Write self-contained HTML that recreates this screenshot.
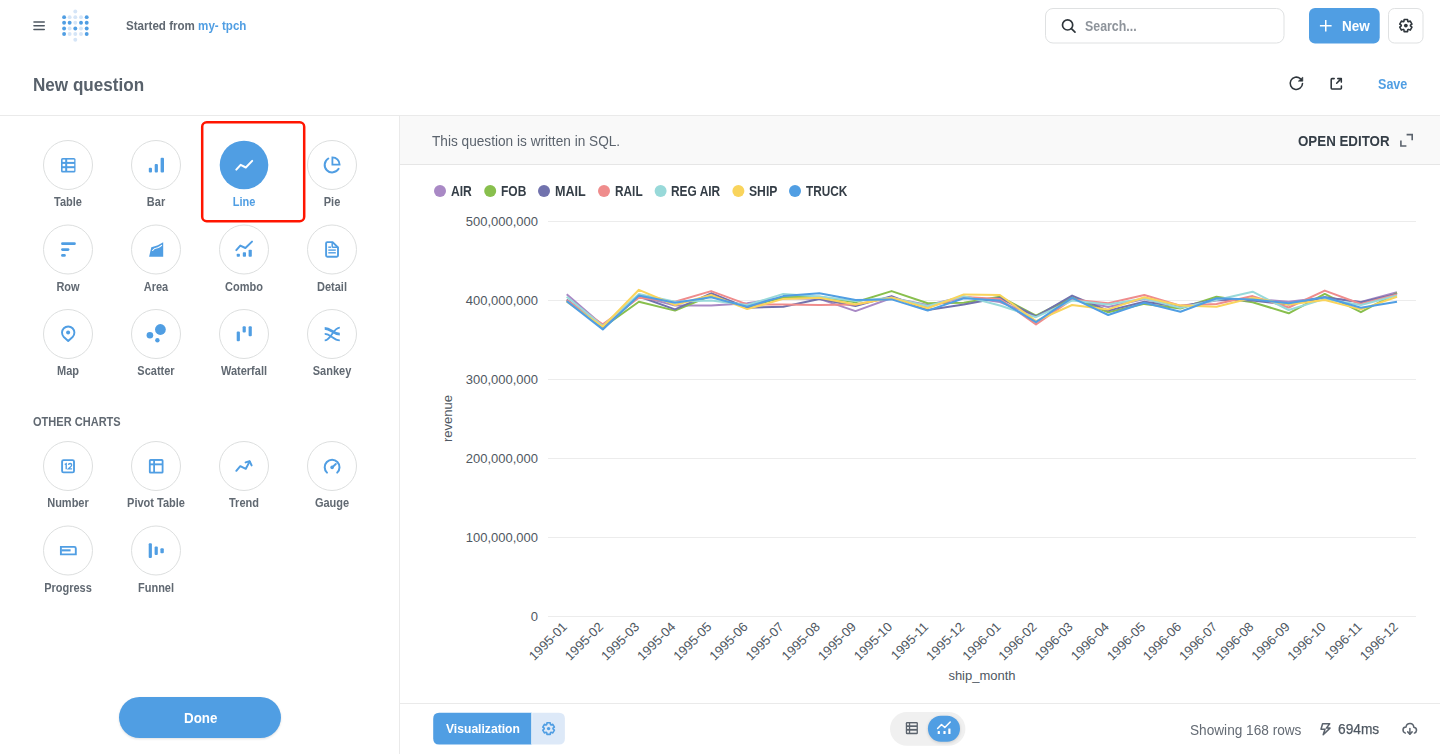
<!DOCTYPE html>
<html><head><meta charset="utf-8">
<style>
*{box-sizing:border-box;margin:0;padding:0}
html,body{width:1440px;height:754px;overflow:hidden;background:#fff;font-family:"Liberation Sans",sans-serif;color:#4f5862}
.ov{position:absolute;left:0;top:0}
.ax text{font-size:13px;fill:#4f5862;font-family:"Liberation Sans",sans-serif}
.t{position:absolute;white-space:nowrap;line-height:1;transform-origin:0 0}
.lbl{position:absolute;width:120px;text-align:center;transform:scaleX(0.88);transform-origin:60px 0;font-size:12.5px;font-weight:bold;line-height:1;white-space:nowrap}
.leg{top:184px;font-size:14px;font-weight:bold;color:#353e47}
</style></head><body>
<svg class="ov" width="1440" height="754" viewBox="0 0 1440 754">
<g fill="#4f5862">
 <rect x="33.2" y="21.2" width="11.8" height="1.6" rx="0.8"/>
 <rect x="33.2" y="24.9" width="11.8" height="1.6" rx="0.8"/>
 <rect x="33.2" y="28.7" width="11.8" height="1.6" rx="0.8"/>
</g>
<circle cx="75.3" cy="11.5" r="1.95" fill="#d5e5f7"/>
<circle cx="64.1" cy="17.15" r="1.95" fill="#509ee3"/>
<circle cx="69.65" cy="17.15" r="1.95" fill="#d5e5f7"/>
<circle cx="75.3" cy="17.15" r="1.95" fill="#d5e5f7"/>
<circle cx="81" cy="17.15" r="1.95" fill="#d5e5f7"/>
<circle cx="86.7" cy="17.15" r="1.95" fill="#509ee3"/>
<circle cx="64.1" cy="22.8" r="1.95" fill="#509ee3"/>
<circle cx="69.65" cy="22.8" r="1.95" fill="#509ee3"/>
<circle cx="75.3" cy="22.8" r="1.95" fill="#d5e5f7"/>
<circle cx="81" cy="22.8" r="1.95" fill="#509ee3"/>
<circle cx="86.7" cy="22.8" r="1.95" fill="#509ee3"/>
<circle cx="64.1" cy="28.5" r="1.95" fill="#509ee3"/>
<circle cx="69.65" cy="28.5" r="1.95" fill="#d5e5f7"/>
<circle cx="75.3" cy="28.5" r="1.95" fill="#509ee3"/>
<circle cx="81" cy="28.5" r="1.95" fill="#d5e5f7"/>
<circle cx="86.7" cy="28.5" r="1.95" fill="#509ee3"/>
<circle cx="64.1" cy="34" r="1.95" fill="#509ee3"/>
<circle cx="69.65" cy="34" r="1.95" fill="#d5e5f7"/>
<circle cx="75.3" cy="34" r="1.95" fill="#d5e5f7"/>
<circle cx="81" cy="34" r="1.95" fill="#d5e5f7"/>
<circle cx="86.7" cy="34" r="1.95" fill="#509ee3"/>
<circle cx="75.3" cy="39.8" r="1.95" fill="#d5e5f7"/>
<rect x="1045.5" y="8.5" width="238.5" height="34.5" rx="7.5" fill="#fff" stroke="#dfe1e2"/>
<g fill="none" stroke="#2e353b" stroke-width="1.7" stroke-linecap="round">
 <circle cx="1067.6" cy="24.9" r="5.1"/>
 <line x1="1071.4" y1="28.7" x2="1075" y2="32.2"/>
</g>
<rect x="1309" y="8" width="70.7" height="35.5" rx="6" fill="#509ee3"/>
<g stroke="#fff" stroke-width="1.5">
 <line x1="1319.9" y1="25.75" x2="1331.6" y2="25.75"/>
 <line x1="1325.75" y1="19.9" x2="1325.75" y2="31.6"/>
</g>
<rect x="1388.5" y="8.5" width="34.5" height="34.5" rx="6" fill="#fff" stroke="#dfe1e2"/>
<path d="M1407.81 21.44 L1407.55 19.53 L1404.15 19.53 L1403.89 21.44 L1403.22 21.82 L1401.44 21.10 L1399.75 24.04 L1401.27 25.22 L1401.27 25.98 L1399.75 27.16 L1401.44 30.10 L1403.22 29.38 L1403.89 29.76 L1404.15 31.67 L1407.55 31.67 L1407.81 29.76 L1408.48 29.38 L1410.26 30.10 L1411.95 27.16 L1410.43 25.98 L1410.43 25.22 L1411.95 24.04 L1410.26 21.10 L1408.48 21.82 Z" fill="none" stroke="#2e353b" stroke-width="1.6" stroke-linejoin="round"/>
<circle cx="1405.85" cy="25.6" r="1.9" fill="#2e353b"/>
<!-- refresh -->
<g fill="none" stroke="#2e353b" stroke-width="1.55" stroke-linecap="round" stroke-linejoin="round">
 <path d="M1302.5 83.5 A6.15 6.15 0 1 1 1300.3 78.6"/>
 <path d="M1334.2 78.6 H1332 Q1331.2 78.6 1331.2 79.4 V88.1 Q1331.2 88.9 1332 88.9 H1340.6 Q1341.4 88.9 1341.4 88.1 V86"/>
 <line x1="1336.7" y1="83.2" x2="1341" y2="78.9"/>
 <polyline points="1337.8,78.6 1341.3,78.6 1341.3,82.1"/>
</g>
<path d="M1302.8 77.1 V81.2 H1298.3 Z" fill="#2e353b" stroke="#2e353b" stroke-width="0.6" stroke-linejoin="round"/>
<!-- borders -->
<rect x="0" y="115" width="1440" height="1" fill="#eaeaea"/>
<rect x="399" y="115" width="1" height="639" fill="#eaeaea"/>
<rect x="400" y="116" width="1040" height="48" fill="#f9f9f9"/>
<rect x="400" y="164" width="1040" height="1" fill="#e6e6e6"/>
<rect x="400" y="703" width="1040" height="1" fill="#eaeaea"/>
<!-- expand icon -->
<g fill="none" stroke="#5b636d" stroke-width="1.6">
 <polyline points="1406.6,134.6 1412.2,134.6 1412.2,140.2"/>
 <polyline points="1400.9,140.6 1400.9,146 1406.4,146"/>
</g>
<!-- legend dots -->
<circle cx="440" cy="191" r="6" fill="#A989C5"/>
<circle cx="490.2" cy="191" r="6" fill="#88BF4D"/>
<circle cx="544" cy="191" r="6" fill="#7172AD"/>
<circle cx="604" cy="191" r="6" fill="#EF8C8C"/>
<circle cx="660.6" cy="191" r="6" fill="#98D9D9"/>
<circle cx="738.4" cy="191" r="6" fill="#F9D45C"/>
<circle cx="795" cy="191" r="6" fill="#509EE3"/>
<!-- sidebar -->
<circle cx="68" cy="165" r="24.5" fill="#fff" stroke="#dddfdf" stroke-width="1"/>
<circle cx="156" cy="165" r="24.5" fill="#fff" stroke="#dddfdf" stroke-width="1"/>
<circle cx="244" cy="165" r="24.3" fill="#509ee3"/>
<circle cx="332" cy="165" r="24.5" fill="#fff" stroke="#dddfdf" stroke-width="1"/>
<circle cx="68" cy="249.5" r="24.5" fill="#fff" stroke="#dddfdf" stroke-width="1"/>
<circle cx="156" cy="249.5" r="24.5" fill="#fff" stroke="#dddfdf" stroke-width="1"/>
<circle cx="244" cy="249.5" r="24.5" fill="#fff" stroke="#dddfdf" stroke-width="1"/>
<circle cx="332" cy="249.5" r="24.5" fill="#fff" stroke="#dddfdf" stroke-width="1"/>
<circle cx="68" cy="334" r="24.5" fill="#fff" stroke="#dddfdf" stroke-width="1"/>
<circle cx="156" cy="334" r="24.5" fill="#fff" stroke="#dddfdf" stroke-width="1"/>
<circle cx="244" cy="334" r="24.5" fill="#fff" stroke="#dddfdf" stroke-width="1"/>
<circle cx="332" cy="334" r="24.5" fill="#fff" stroke="#dddfdf" stroke-width="1"/>
<circle cx="68" cy="466" r="24.5" fill="#fff" stroke="#dddfdf" stroke-width="1"/>
<circle cx="156" cy="466" r="24.5" fill="#fff" stroke="#dddfdf" stroke-width="1"/>
<circle cx="244" cy="466" r="24.5" fill="#fff" stroke="#dddfdf" stroke-width="1"/>
<circle cx="332" cy="466" r="24.5" fill="#fff" stroke="#dddfdf" stroke-width="1"/>
<circle cx="68" cy="550.5" r="24.5" fill="#fff" stroke="#dddfdf" stroke-width="1"/>
<circle cx="156" cy="550.5" r="24.5" fill="#fff" stroke="#dddfdf" stroke-width="1"/>
<rect x="202.2" y="122.2" width="102" height="99" rx="4.5" fill="none" stroke="#ff1500" stroke-width="2.5"/>

<g fill="#509ee3">
 <rect x="61" y="158" width="14.5" height="14.6" rx="1.6"/>
 <rect x="148.8" y="167.7" width="3.2" height="4.9" rx="1"/>
 <rect x="154.7" y="163.9" width="3.2" height="8.7" rx="1"/>
 <rect x="160.6" y="157.8" width="3.4" height="14.8" rx="1"/>
 <rect x="61.1" y="242.3" width="14.7" height="2.7" rx="1.3"/>
 <rect x="61.1" y="248.2" width="8.3" height="2.7" rx="1.3"/>
 <rect x="61.1" y="254" width="4.7" height="2.8" rx="1.3"/>
 <path d="M149.1 256.8 L151.3 247.2 Q155 246 157.8 245.2 Q160.5 244 163.2 242.3 L163.2 256.8 Z"/>
 <rect x="236.7" y="253.8" width="3.2" height="3" rx="0.8"/>
 <rect x="242.8" y="252.2" width="3.2" height="4.6" rx="0.8"/>
 <rect x="248.6" y="249.8" width="3.2" height="7" rx="0.8"/>
 <circle cx="68.1" cy="332.5" r="2"/>
 <circle cx="160.4" cy="329.5" r="5.4"/>
 <circle cx="149.9" cy="335.2" r="3.3"/>
 <circle cx="157.4" cy="340.2" r="2.2"/>
 <rect x="236.7" y="331.4" width="3.2" height="9.8" rx="1"/>
 <rect x="242.6" y="326.3" width="3.2" height="6.2" rx="1"/>
 <rect x="248.6" y="326.3" width="3.2" height="9.9" rx="1"/>
 <rect x="148.9" y="459.1" width="14.6" height="14.4" rx="1.6"/>
 <circle cx="332.1" cy="467.4" r="1.8"/>
 <rect x="61.5" y="549.3" width="9.1" height="2.1"/>
 <rect x="148.7" y="543.2" width="3.2" height="14.8" rx="1"/>
 <rect x="154.6" y="546.4" width="3.2" height="8.6" rx="1"/>
 <rect x="160.4" y="548.2" width="3.4" height="5.1" rx="1"/>
</g>
<g fill="#fff">
 <rect x="62.6" y="159.6" width="2.6" height="2.3"/>
 <rect x="62.6" y="163.9" width="2.6" height="2.3"/>
 <rect x="62.6" y="168.2" width="2.6" height="2.6"/>
 <rect x="67.2" y="159.6" width="7" height="2.3"/>
 <rect x="67.2" y="163.9" width="7" height="2.3"/>
 <rect x="67.2" y="168.2" width="7" height="2.6"/>
 <rect x="150.7" y="460.9" width="2.5" height="2.5"/>
 <rect x="155" y="460.9" width="6.7" height="2.5"/>
 <rect x="150.7" y="465.3" width="2.5" height="6.4"/>
 <rect x="155" y="465.3" width="6.7" height="6.4"/>
</g>
<g fill="none" stroke="#509ee3" stroke-width="2" stroke-linecap="round" stroke-linejoin="round">
 <path d="M328.3 158.5 A7.5 7.5 0 1 0 338.6 168.8"/>
 <path d="M332.4 164.6 V157.4 A7.2 7.2 0 0 1 339.6 164.6 Z" stroke-width="1.8" stroke-linecap="butt" stroke-linejoin="miter"/>
 <polyline points="236.3,250.1 240.3,245.6 245.4,248 252,241.6"/>
 <path d="M327.3 242.1 H332.6 L338 247.5 V255.6 Q338 256.8 336.8 256.8 H327.3 Q326.1 256.8 326.1 255.6 V243.3 Q326.1 242.1 327.3 242.1 Z" stroke-width="1.9"/>
 <path d="M332.2 242.4 V246.2 Q332.2 247.3 333.3 247.3 H337.6" stroke-width="1.5"/>
 <path d="M68.2 341 L63.8 337 A6.2 6.2 0 1 1 72.6 337 Z" stroke-width="1.9"/>
 <path d="M324.7 328.3 C331 328.3 333 334.2 339.8 334.2" stroke-width="2.8" stroke-linecap="butt"/>
 <path d="M324.7 333.9 C331 333.9 333 340.4 339.8 340.4" stroke-width="1.8" stroke-linecap="butt"/>
 <path d="M339.8 327.6 C333 327.6 331 340.4 324.7 340.4" stroke-width="1.8" stroke-linecap="butt"/>
 <rect x="62.1" y="460.1" width="11.9" height="12.3" rx="1.5" stroke-width="1.9"/>
 <path d="M64.7 464.5 L66.2 463.6 V469.2" stroke-width="1.35" stroke-linecap="butt" stroke-linejoin="miter"/>
 <path d="M68.4 464.9 Q68.6 463.5 70.1 463.5 Q71.7 463.6 71.7 465 Q71.6 466.1 70.4 467.1 L68.4 468.8 H72.1" stroke-width="1.3" stroke-linecap="butt" stroke-linejoin="miter"/>
 <polyline points="236.3,470.8 240.3,466.2 245.8,468.8 249.6,461.6"/>
 <polyline points="245.6,462.4 249.6,461.2 251.6,465.4"/>
 <path d="M327 472.6 A7.4 7.4 0 1 1 337.2 472.6"/>
 <line x1="332.1" y1="467.4" x2="335.8" y2="464"/>
 <path d="M60.9 546.9 H74.3 Q75.8 546.9 75.8 548.4 V554.4 H60.9 Z" stroke-width="1.9" stroke-linecap="butt" stroke-linejoin="miter"/>
</g>
<g fill="none" stroke="#fff" stroke-width="2" stroke-linecap="round" stroke-linejoin="round">
 <polyline points="236.3,169.6 240.65,164.8 245.8,167.5 252.2,160.9"/>
 <path d="M152.6 250.5 Q154 248.3 157.6 247.8 Q160 247 161.6 245.4" stroke-width="1.1"/>
</g>
<g fill="#509ee3">
 <rect x="328.3" y="246.5" width="2.8" height="1.4"/>
 <rect x="328.3" y="249.4" width="7.5" height="1.4"/>
 <rect x="328.3" y="252.1" width="7.5" height="1.4"/>
</g>

<!-- done -->
<rect x="119" y="697" width="162" height="41" rx="20.5" fill="#509ee3" style="filter:drop-shadow(0 1px 1px rgba(0,0,0,0.12))"/>
<!-- footer -->
<path d="M439.2 712.8 H531.8 V744.6 H439.2 Q433.2 744.6 433.2 738.6 V718.8 Q433.2 712.8 439.2 712.8 Z" fill="#509ee3"/>
<rect x="531.3" y="712.8" width="1" height="31.8" fill="#f4f8fd"/>
<path d="M532.3 712.8 H558.9 Q564.9 712.8 564.9 718.8 V738.6 Q564.9 744.6 558.9 744.6 H531.8 Z" fill="#dde9f8"/>
<path d="M550.47 724.62 L550.22 722.82 L546.98 722.82 L546.73 724.62 L546.09 724.99 L544.40 724.31 L542.79 727.11 L544.22 728.23 L544.22 728.97 L542.79 730.09 L544.40 732.89 L546.09 732.21 L546.73 732.58 L546.98 734.38 L550.22 734.38 L550.47 732.58 L551.11 732.21 L552.80 732.89 L554.41 730.09 L552.98 728.97 L552.98 728.23 L554.41 727.11 L552.80 724.31 L551.11 724.99 Z" fill="none" stroke="#509ee3" stroke-width="1.6" stroke-linejoin="round"/>
<circle cx="548.6" cy="728.6" r="1.7" fill="#509ee3"/>
<rect x="890" y="712" width="75.4" height="33.8" rx="16.9" fill="#f0f0f0"/>
<rect x="927.9" y="715.8" width="32.1" height="25.9" rx="12.95" fill="#509ee3" style="filter:drop-shadow(0 1px 1.5px rgba(0,0,0,0.15))"/>
<rect x="905.8" y="722" width="12.1" height="12.2" rx="1.3" fill="#5b636d"/>
<g fill="#f0f0f0">
 <rect x="907.1" y="723.4" width="1.8" height="1.9"/>
 <rect x="907.1" y="727" width="1.8" height="1.9"/>
 <rect x="907.1" y="730.7" width="1.8" height="2"/>
 <rect x="910.2" y="723.4" width="6.4" height="1.9"/>
 <rect x="910.2" y="727" width="6.4" height="1.9"/>
 <rect x="910.2" y="730.7" width="6.4" height="2"/>
</g>
<g fill="none" stroke="#fff" stroke-width="1.5" stroke-linecap="round" stroke-linejoin="round">
 <polyline points="937.6,728.5 941.5,724.5 944.8,727.5 950.2,722"/>
</g>
<g fill="#fff">
 <rect x="937.7" y="730.9" width="2.2" height="3.2" rx="0.4"/>
 <rect x="943.4" y="730.9" width="2.2" height="3.2" rx="0.4"/>
 <rect x="948.3" y="728.4" width="2.2" height="5.7" rx="0.4"/>
</g>
<g fill="none" stroke="#5b636d" stroke-width="1.5" stroke-linejoin="round" stroke-linecap="round">
 <path d="M1322.6 723.7 H1329.7 L1326.4 728.1 H1330 L1323.2 734.7 L1325 729.3 H1321 Z"/>
 <path d="M1405.4 733.1 Q1402.9 732.2 1403 729.6 Q1403.3 727.2 1406 727.1 Q1406.6 723.5 1410.1 723.6 Q1413.5 723.8 1413.8 727.2 Q1416.7 727.7 1416.5 730.4 Q1416.3 732.5 1414.4 733.1"/>
 <line x1="1409.9" y1="728.4" x2="1409.9" y2="734"/>
 <polyline points="1407.7,731.9 1409.9,734.1 1412.1,731.9"/>
</g>
</svg>
<svg class="ov" width="1440" height="754" viewBox="0 0 1440 754">
<line x1="548" y1="221.5" x2="1416" y2="221.5" stroke="#ececec" stroke-width="1"/>
<line x1="548" y1="300.5" x2="1416" y2="300.5" stroke="#ececec" stroke-width="1"/>
<line x1="548" y1="379.5" x2="1416" y2="379.5" stroke="#ececec" stroke-width="1"/>
<line x1="548" y1="458.5" x2="1416" y2="458.5" stroke="#ececec" stroke-width="1"/>
<line x1="548" y1="537.5" x2="1416" y2="537.5" stroke="#ececec" stroke-width="1"/>
<line x1="548" y1="616.5" x2="1416" y2="616.5" stroke="#ececec" stroke-width="1"/>
<g class="ax">
<text x="538" y="225.5" text-anchor="end">500,000,000</text>
<text x="538" y="304.5" text-anchor="end">400,000,000</text>
<text x="538" y="383.5" text-anchor="end">300,000,000</text>
<text x="538" y="462.5" text-anchor="end">200,000,000</text>
<text x="538" y="541.5" text-anchor="end">100,000,000</text>
<text x="538" y="620.5" text-anchor="end">0</text>
<text transform="translate(567.9,627.6) rotate(-45)" text-anchor="end">1995-01</text>
<text transform="translate(604.0,627.6) rotate(-45)" text-anchor="end">1995-02</text>
<text transform="translate(640.2,627.6) rotate(-45)" text-anchor="end">1995-03</text>
<text transform="translate(676.3,627.6) rotate(-45)" text-anchor="end">1995-04</text>
<text transform="translate(712.4,627.6) rotate(-45)" text-anchor="end">1995-05</text>
<text transform="translate(748.6,627.6) rotate(-45)" text-anchor="end">1995-06</text>
<text transform="translate(784.7,627.6) rotate(-45)" text-anchor="end">1995-07</text>
<text transform="translate(820.8,627.6) rotate(-45)" text-anchor="end">1995-08</text>
<text transform="translate(856.9,627.6) rotate(-45)" text-anchor="end">1995-09</text>
<text transform="translate(893.1,627.6) rotate(-45)" text-anchor="end">1995-10</text>
<text transform="translate(929.2,627.6) rotate(-45)" text-anchor="end">1995-11</text>
<text transform="translate(965.3,627.6) rotate(-45)" text-anchor="end">1995-12</text>
<text transform="translate(1001.5,627.6) rotate(-45)" text-anchor="end">1996-01</text>
<text transform="translate(1037.6,627.6) rotate(-45)" text-anchor="end">1996-02</text>
<text transform="translate(1073.7,627.6) rotate(-45)" text-anchor="end">1996-03</text>
<text transform="translate(1109.9,627.6) rotate(-45)" text-anchor="end">1996-04</text>
<text transform="translate(1146.0,627.6) rotate(-45)" text-anchor="end">1996-05</text>
<text transform="translate(1182.1,627.6) rotate(-45)" text-anchor="end">1996-06</text>
<text transform="translate(1218.2,627.6) rotate(-45)" text-anchor="end">1996-07</text>
<text transform="translate(1254.4,627.6) rotate(-45)" text-anchor="end">1996-08</text>
<text transform="translate(1290.5,627.6) rotate(-45)" text-anchor="end">1996-09</text>
<text transform="translate(1326.6,627.6) rotate(-45)" text-anchor="end">1996-10</text>
<text transform="translate(1362.8,627.6) rotate(-45)" text-anchor="end">1996-11</text>
<text transform="translate(1398.9,627.6) rotate(-45)" text-anchor="end">1996-12</text>
<text x="982" y="680" text-anchor="middle">ship_month</text>
<text transform="translate(452,418.5) rotate(-90)" text-anchor="middle">revenue</text>
</g>
<polyline points="566.7,294.2 602.8,325.5 638.9,296.0 675.0,305.6 711.1,305.6 747.2,303.3 783.3,298.0 819.4,298.9 855.5,311.1 891.6,298.0 927.7,305.0 963.8,296.7 999.9,302.0 1036.0,316.1 1072.1,299.0 1108.2,307.0 1144.3,299.0 1180.4,306.0 1216.5,300.5 1252.6,298.9 1288.7,301.7 1324.8,297.5 1360.9,302.0 1397.0,292.2" fill="none" stroke="#A989C5" stroke-width="2" stroke-linejoin="round"/>
<polyline points="566.7,300.5 602.8,327.5 638.9,301.7 675.0,310.6 711.1,295.5 747.2,307.0 783.3,297.2 819.4,296.7 855.5,302.2 891.6,291.1 927.7,303.3 963.8,302.8 999.9,296.7 1036.0,315.6 1072.1,297.5 1108.2,312.2 1144.3,303.9 1180.4,308.5 1216.5,296.7 1252.6,302.2 1288.7,313.3 1324.8,293.9 1360.9,312.2 1397.0,292.8" fill="none" stroke="#88BF4D" stroke-width="2" stroke-linejoin="round"/>
<polyline points="566.7,299.5 602.8,327.0 638.9,296.5 675.0,309.4 711.1,293.3 747.2,307.8 783.3,306.7 819.4,298.9 855.5,306.1 891.6,296.1 927.7,310.0 963.8,304.4 999.9,297.8 1036.0,316.5 1072.1,295.6 1108.2,310.6 1144.3,301.7 1180.4,306.7 1216.5,299.5 1252.6,300.5 1288.7,304.5 1324.8,297.2 1360.9,302.2 1397.0,293.9" fill="none" stroke="#7172AD" stroke-width="2" stroke-linejoin="round"/>
<polyline points="566.7,300.0 602.8,324.4 638.9,297.8 675.0,301.7 711.1,291.1 747.2,304.4 783.3,304.4 819.4,305.0 855.5,304.4 891.6,297.5 927.7,307.0 963.8,297.0 999.9,299.0 1036.0,324.4 1072.1,299.5 1108.2,303.3 1144.3,295.0 1180.4,305.6 1216.5,303.9 1252.6,296.1 1288.7,307.5 1324.8,290.6 1360.9,304.0 1397.0,294.4" fill="none" stroke="#EF8C8C" stroke-width="2" stroke-linejoin="round"/>
<polyline points="566.7,296.7 602.8,326.0 638.9,293.9 675.0,301.7 711.1,300.6 747.2,305.0 783.3,293.9 819.4,296.5 855.5,301.0 891.6,297.8 927.7,306.0 963.8,296.1 999.9,305.5 1036.0,317.2 1072.1,300.6 1108.2,304.4 1144.3,298.5 1180.4,307.8 1216.5,300.0 1252.6,291.7 1288.7,310.0 1324.8,298.9 1360.9,305.0 1397.0,295.5" fill="none" stroke="#98D9D9" stroke-width="2" stroke-linejoin="round"/>
<polyline points="566.7,301.7 602.8,326.7 638.9,289.8 675.0,305.0 711.1,295.0 747.2,309.1 783.3,298.9 819.4,297.8 855.5,304.4 891.6,297.8 927.7,308.3 963.8,294.4 999.9,295.0 1036.0,321.1 1072.1,305.0 1108.2,309.4 1144.3,297.2 1180.4,305.6 1216.5,306.7 1252.6,297.8 1288.7,304.4 1324.8,300.0 1360.9,309.4 1397.0,296.7" fill="none" stroke="#F9D45C" stroke-width="2" stroke-linejoin="round"/>
<polyline points="566.7,301.1 602.8,329.4 638.9,295.6 675.0,302.8 711.1,297.2 747.2,306.7 783.3,296.1 819.4,293.3 855.5,300.0 891.6,299.4 927.7,310.6 963.8,298.3 999.9,300.6 1036.0,322.2 1072.1,297.8 1108.2,315.0 1144.3,302.8 1180.4,311.7 1216.5,298.3 1252.6,299.4 1288.7,303.3 1324.8,297.2 1360.9,307.8 1397.0,301.7" fill="none" stroke="#509EE3" stroke-width="2" stroke-linejoin="round"/>
</svg>
<div class="t" style="left:125.6px;top:20px;transform:scaleX(0.927);font-size:12.5px;font-weight:bold;color:#616972">Started from <span style="color:#509ee3">my- tpch</span></div>
<div class="t" style="left:1085px;top:19.2px;transform:scaleX(0.884);font-size:14px;font-weight:bold;color:#8e949b">Search...</div>
<div class="t" style="left:1342px;top:18.5px;transform:scaleX(0.962);font-size:14px;font-weight:bold;color:#fff">New</div>
<div class="t" style="left:32.6px;top:75.8px;transform:scaleX(0.95);font-size:18px;font-weight:bold;color:#58616b">New question</div>
<div class="t" style="left:1377.5px;top:76.5px;transform:scaleX(0.897);font-size:14px;font-weight:bold;color:#509ee3">Save</div>
<div class="t" style="left:432.3px;top:134px;transform:scaleX(0.975);font-size:14px;color:#5b636d">This question is written in SQL.</div>
<div class="t" style="left:1297.9px;top:134px;transform:scaleX(0.952);font-size:14px;font-weight:bold;color:#353e47">OPEN EDITOR</div>
<div class="leg t" style="left:450.7px;transform:scaleX(0.864)">AIR</div>
<div class="leg t" style="left:500.6px;transform:scaleX(0.857)">FOB</div>
<div class="leg t" style="left:554.9px;transform:scaleX(0.900)">MAIL</div>
<div class="leg t" style="left:614.8px;transform:scaleX(0.846)">RAIL</div>
<div class="leg t" style="left:671.3px;transform:scaleX(0.851)">REG AIR</div>
<div class="leg t" style="left:748.8px;transform:scaleX(0.868)">SHIP</div>
<div class="leg t" style="left:805.8px;transform:scaleX(0.844)">TRUCK</div>
<div class="lbl" style="left:8px;top:196.0px;color:#616972">Table</div>
<div class="lbl" style="left:96px;top:196.0px;color:#616972">Bar</div>
<div class="lbl" style="left:184px;top:196.0px;color:#509ee3">Line</div>
<div class="lbl" style="left:272px;top:196.0px;color:#616972">Pie</div>
<div class="lbl" style="left:8px;top:280.5px;color:#616972">Row</div>
<div class="lbl" style="left:96px;top:280.5px;color:#616972">Area</div>
<div class="lbl" style="left:184px;top:280.5px;color:#616972">Combo</div>
<div class="lbl" style="left:272px;top:280.5px;color:#616972">Detail</div>
<div class="lbl" style="left:8px;top:365.0px;color:#616972">Map</div>
<div class="lbl" style="left:96px;top:365.0px;color:#616972">Scatter</div>
<div class="lbl" style="left:184px;top:365.0px;color:#616972">Waterfall</div>
<div class="lbl" style="left:272px;top:365.0px;color:#616972">Sankey</div>
<div class="lbl" style="left:8px;top:497.0px;color:#616972">Number</div>
<div class="lbl" style="left:96px;top:497.0px;color:#616972">Pivot Table</div>
<div class="lbl" style="left:184px;top:497.0px;color:#616972">Trend</div>
<div class="lbl" style="left:272px;top:497.0px;color:#616972">Gauge</div>
<div class="lbl" style="left:8px;top:581.5px;color:#616972">Progress</div>
<div class="lbl" style="left:96px;top:581.5px;color:#616972">Funnel</div>
<div class="t" style="left:32.6px;top:415.8px;transform:scaleX(0.92);font-size:12px;font-weight:bold;color:#616972">OTHER CHARTS</div>
<div class="t" style="left:183.7px;top:711.3px;transform:scaleX(0.921);font-size:14.5px;font-weight:bold;color:#fff">Done</div>
<div class="t" style="left:445.7px;top:722.2px;transform:scaleX(0.898);font-size:13.5px;font-weight:bold;color:#fff">Visualization</div>
<div class="t" style="left:1189.7px;top:722.8px;transform:scaleX(0.974);font-size:14px;color:#646b74">Showing 168 rows</div>
<div class="t" style="left:1337.8px;top:721.5px;transform:scaleX(0.98);font-size:14px;color:#4f5862;-webkit-text-stroke:0.25px #4f5862">694ms</div>
</body></html>
